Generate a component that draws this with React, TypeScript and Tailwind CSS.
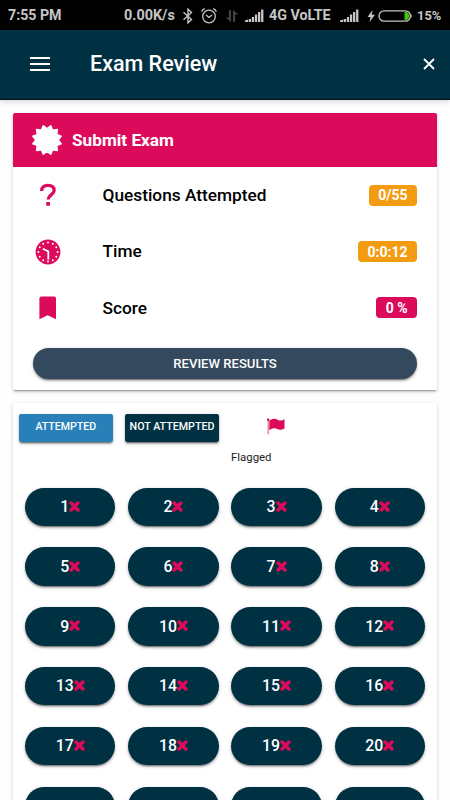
import React from "react";

const LABELLED = 20;
const TOTAL_SHOWN = 24;

// twelve points, with a notch at the top
const burstPoints = Array.from({ length: 24 }, (_, i) => {
  const angle = (i * Math.PI) / 12;
  const r = i % 2 === 0 ? 11 : 14.5;
  return `${(16 + r * Math.sin(angle)).toFixed(2)},${(16 - r * Math.cos(angle)).toFixed(2)}`;
}).join(" ");

function BurstIcon() {
  return (
    <svg className="h-8 w-8" viewBox="0 0 32 32" fill="white" stroke="white" strokeWidth="1.8" strokeLinejoin="round">
      <polygon points={burstPoints} />
    </svg>
  );
}

function QuestionIcon() {
  return (
    <svg className="h-6 w-[18px]" viewBox="0 0 18 24" fill="none" stroke="#dc0a5b" strokeWidth="3.3">
      <path d="M2.6 8.1C2.6 4.4 4.9 2.3 8.9 2.3c3.9 0 6.2 2 6.2 5.1 0 4.2-6 4.8-6 9.2" />
      <path d="M9.1 19.1v3.6" strokeWidth="3.7" />
    </svg>
  );
}

function ClockIcon() {
  const dots = Array.from({ length: 12 }, (_, i) => (i * Math.PI) / 6);
  return (
    <svg className="h-[26px] w-[26px]" viewBox="0 0 26 26">
      <circle cx="13" cy="13" r="12.4" fill="#dc0a5b" />
      {dots.map((a, i) => (
        <circle key={i} cx={13 + 9.6 * Math.sin(a)} cy={13 - 9.6 * Math.cos(a)} r="1" fill="white" />
      ))}
      <path d="M7.8 9.8l5.5 2.6v8" fill="none" stroke="white" strokeWidth="1.8" strokeLinejoin="round" />
    </svg>
  );
}

function BookmarkIcon() {
  return (
    <svg className="h-6 w-[18px]" viewBox="0 0 18 24" fill="#dc0a5b">
      <path d="M2.2.5h12.9q1.9 0 1.9 1.9v20.8L8.7 19.3.4 23.2V2.4Q.4.5 2.2.5z" />
    </svg>
  );
}

function FlagIcon() {
  return (
    <svg className="h-[17px] w-5" viewBox="0 0 20 17" fill="#dc0a5b">
      <circle cx="2.2" cy="1.7" r="1.3" />
      <path d="M1.7 2h1v14.3h-1z" fillOpacity="0.75" />
      <path d="M3.3 2.8C7.5.1 9.3.5 12 1.9c2 1 4 .5 6.5-.7v9.3c-3 1.5-4.9 1.7-7.2.6-2.7-1.3-4.8-.9-8 1.1z" />
    </svg>
  );
}

function CrossIcon() {
  return (
    <svg className="mb-px h-[11px] w-[11px]" viewBox="0 0 11 11" fill="none" stroke="#dc0a5b">
      <path d="M2.1 2.1l6.8 6.8M8.9 2.1L2.1 8.9" strokeWidth="3.6" strokeLinecap="round" />
    </svg>
  );
}

function Signal() {
  return (
    <svg className="h-[13px] w-[19px]" viewBox="0 0 19 13" fill="#c6c6c6">
      <path d="M0 13v-1.4l3-1V13zM3.7 10h2.3v3H3.7zM6.8 8h2.3v5H6.8zM9.9 5.5h2.3V13H9.9zM13 3h2.3v10H13zM16.1.5h2.3V13h-2.3z" />
    </svg>
  );
}

function StatusBar() {
  return (
    <div className="flex h-[30px] shrink-0 items-center bg-black pt-px pl-[8px] font-bold text-[#c6c6c6]">
      <span className="w-[116px] text-[14.2px] whitespace-nowrap">7:55 PM</span>
      <span className="w-[58px] text-[14.4px] whitespace-nowrap">0.00K/s</span>
      <svg className="h-4 w-3" viewBox="0 0 12 16" fill="none" stroke="#c6c6c6" strokeWidth="1.4">
        <path d="M1.5 4.2l8 7.2L6 14.8V1.2l3.5 3.4-8 7.2" />
      </svg>
      <svg className="ml-[7px] h-4 w-4" viewBox="0 0 16 16" fill="none" stroke="#c6c6c6" strokeWidth="1.3">
        <circle cx="8" cy="8.5" r="6.3" />
        <path d="M.6 3.7Q1.5 1.5 3.8.7M12.2.7q2.3.8 3.2 3M5 7l3 2.4L11 7" />
      </svg>
      <svg className="ml-[8px] h-3.5 w-3.5" viewBox="0 0 14 14" fill="#444">
        <path d="M4 1h2v12L.5 8.5H4zM8 13h2V5.5h3.5L8 1z" />
      </svg>
      <span className="ml-[6px]"><Signal /></span>
      <span className="ml-[5px] w-[71px] text-[14.3px] whitespace-nowrap">4G VoLTE</span>
      <Signal />
      <svg className="ml-[8px] h-3 w-[9px]" viewBox="0 0 9 12" fill="#c6c6c6">
        <path d="M5.5 0L.5 7h3l-1 5L8 4.8H4.8z" />
      </svg>
      <svg className="ml-[2px] h-3 w-[35px]" viewBox="0 0 35 12">
        <rect x="1" y=".8" width="31.5" height="10.4" rx="5.2" fill="none" stroke="#c6c6c6" strokeWidth="1.3" />
        <path d="M33.2 3.5q1.5 2.5 0 5z" fill="#c6c6c6" />
        <path d="M26.5 2h1.6q3.2.8 3.2 4t-3.2 4h-1.6z" fill="#42c400" />
      </svg>
      <span className="ml-[4px] pt-px text-[12.9px]">15%</span>
    </div>
  );
}

function Row({ icon, label, value, color }: { icon: React.ReactNode; label: string; value: string; color: string }) {
  return (
    <div className="flex h-[56.4px] items-center pr-5 pl-5">
      <div className="flex w-[30px] justify-center">{icon}</div>
      <span className="ml-[39.5px] flex-1 pt-[1.5px] text-[17.3px] font-medium text-black">{label}</span>
      <span className={`flex h-[21px] items-center rounded-[4px] px-[9.5px] pt-px text-[14px] font-bold text-white ${color}`}>
        {value}
      </span>
    </div>
  );
}

const cardShadow = "shadow-[0_2px_2px_0_rgba(0,0,0,0.14),0_3px_1px_-2px_rgba(0,0,0,0.2),0_1px_5px_0_rgba(0,0,0,0.12)]";
const buttonShadow = "shadow-[0_2px_2px_0_rgba(0,0,0,0.22),0_3px_1px_-2px_rgba(0,0,0,0.3),0_1px_4px_0_rgba(0,0,0,0.16)]";

export default function App() {
  const questions = Array.from({ length: TOTAL_SHOWN }, (_, i) => i + 1);

  return (
    <main className="flex h-[800px] w-[450px] flex-col overflow-hidden bg-[#fefefe] font-[Roboto,sans-serif]">
      <StatusBar />
      <header className="flex h-[70px] shrink-0 items-center border-b border-[#001019] bg-[#003143] pl-[30px] text-white shadow-[0_2px_6px_rgba(0,0,0,0.15)]">
        <div className="mb-px flex w-5 flex-col gap-[4px]">
          <div className="h-[2px] bg-white" />
          <div className="h-[2px] bg-white" />
          <div className="h-[2px] bg-white" />
        </div>
        <h1 className="ml-[40px] flex-1 pb-px text-[21.5px] font-medium">Exam Review</h1>
        <svg className="mr-[15px] mb-px h-3 w-3" viewBox="0 0 12 12" stroke="white" strokeWidth="1.8">
          <path d="M1 1l10 10M11 1L1 11" />
        </svg>
      </header>

      <section className={`mx-[13px] mt-[13px] h-[277px] shrink-0 overflow-hidden rounded-[2px] bg-white ${cardShadow}`}>
        <div className="flex h-[54px] items-center bg-[#dc0a5b] pl-[18px] text-white">
          <BurstIcon />
          <h2 className="ml-[9px] pt-px text-[17.2px] font-bold">Submit Exam</h2>
        </div>
        <Row icon={<QuestionIcon />} label="Questions Attempted" value="0/55" color="bg-[#f39c12]" />
        <Row icon={<ClockIcon />} label="Time" value="0:0:12" color="bg-[#f39c12]" />
        <Row icon={<BookmarkIcon />} label="Score" value="0 %" color="bg-[#dc0a5b]" />
        <button className={`mx-[20px] mt-[11.8px] h-[31px] w-[384px] rounded-full bg-[#34495e] text-[13.1px] font-medium text-white ${buttonShadow}`}>
          REVIEW RESULTS
        </button>
      </section>

      <section className={`mx-[13px] mt-[13px] h-[420px] shrink-0 rounded-[2px] bg-white ${cardShadow}`}>
        <div className="flex h-[84.6px] pt-[11px] pl-[6px]">
          <div className={`flex h-[28px] w-[93.5px] items-center justify-center rounded-[2px] bg-[#2980b9] pb-[3px] text-[10.6px] font-medium text-white ${buttonShadow}`}>
            ATTEMPTED
          </div>
          <div className={`ml-[12.5px] flex h-[28px] w-[94px] items-center justify-center rounded-[2px] bg-[#003143] pb-[2px] text-[10.7px] font-medium whitespace-nowrap text-white ${buttonShadow}`}>
            NOT ATTEMPTED
          </div>
          <div className="ml-[12px] flex flex-col pt-[4px]">
            <div className="pl-[35px]"><FlagIcon /></div>
            <span className="mt-[14px] text-[11.4px] leading-4 text-[#222]">Flagged</span>
          </div>
        </div>
        <div className="grid grid-cols-4 gap-x-[12.7px] gap-y-[21.3px] px-[12px]">
          {questions.map((n) => (
            <button
              key={n}
              className={`flex h-[38.5px] items-center justify-center rounded-full bg-[#003143] text-[15.8px] font-medium text-white ${buttonShadow}`}
            >
              {n <= LABELLED && (
                <>
                  {n}
                  <CrossIcon />
                </>
              )}
            </button>
          ))}
        </div>
      </section>
    </main>
  );
}
